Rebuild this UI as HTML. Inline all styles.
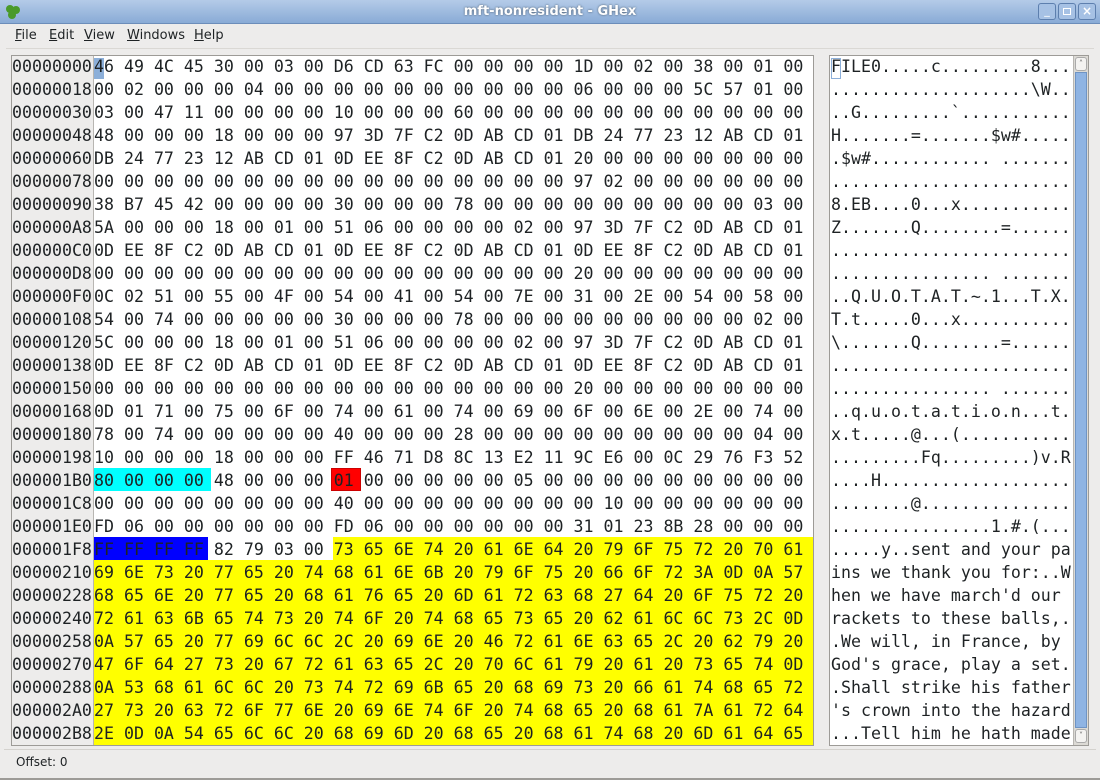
<!DOCTYPE html>
<html><head><meta charset="utf-8"><style>
*{margin:0;padding:0;box-sizing:border-box}
body{width:1100px;height:780px;background:#edeceb;position:relative;overflow:hidden;font-family:"DejaVu Sans","Liberation Sans",sans-serif;color:#1e2224}
.abs{position:absolute}
#title{left:0;top:0;width:1100px;height:24px;background:linear-gradient(#b4cbe8,#89abd6);border-bottom:1px solid #6c8dba;color:#fff;font-weight:bold;font-size:13px;text-align:center;line-height:23px;text-shadow:0 0 2px #456}
#menu{left:0;top:24px;width:1100px;height:24px;font-size:13px;line-height:24px}
#menu span{position:absolute;top:0}
#menu u{text-decoration:underline}
.mono{font-family:"DejaVu Sans Mono","Liberation Mono",monospace;font-size:16.6px;white-space:pre;line-height:23px}
#off{left:12px;top:56px;width:82px;height:689px;background:#edeceb;border-right:1px solid #b8b6b2}
#hexbg{left:94px;top:56px;width:719px;height:689px;background:#fff}
#frame{left:11px;top:55px;width:803px;height:691px;border:1px solid #9d9b97}
#ascbg{left:829px;top:55px;width:260px;height:691px;border:1px solid #9d9b97;background:#fff}
.rows{top:55px}
.rows div{height:23px}
#sb{left:1073px;top:56px;width:15px;height:689px;background:#dcdad5;border-left:1px solid #b8b6b2}
#thumb{left:1075px;top:72px;width:12px;height:656px;background:#8fb4e3;border:1px solid #6f94c4}
</style></head><body>
<div id="title" class="abs">mft-nonresident - GHex</div>
<svg class="abs" style="left:5px;top:4px" width="16" height="16"><circle cx="5" cy="5" r="4" fill="#4a9a2a"/><circle cx="11" cy="6" r="4" fill="#4a9a2a"/><circle cx="7" cy="11" r="4" fill="#4a9a2a"/></svg>
<div class="abs" style="left:1038px;top:3px;width:18px;height:17px;border:1px solid #5d7fae;border-radius:3px;background:#a6c1e4;color:#fff;font-size:11px;text-align:center;line-height:14px">_</div>
<div class="abs" style="left:1058px;top:3px;width:18px;height:17px;border:1px solid #5d7fae;border-radius:3px;background:#a6c1e4"><div style="margin:4px;width:8px;height:7px;border:1px solid #fff"></div></div>
<div class="abs" style="left:1078px;top:3px;width:18px;height:17px;border:1px solid #5d7fae;border-radius:3px;background:#a6c1e4;color:#fff;font-size:12px;text-align:center;line-height:15px;font-weight:bold">×</div>
<div id="menu" class="abs">
<span style="left:15px"><u>F</u>ile</span><span style="left:49px"><u>E</u>dit</span><span style="left:84px"><u>V</u>iew</span><span style="left:127px"><u>W</u>indows</span><span style="left:194px"><u>H</u>elp</span>
</div>
<div class="abs" style="left:6px;top:48px;width:1088px;height:1px;background:#dad8d4"></div>
<div id="off" class="abs"></div>
<div id="hexbg" class="abs"></div>
<div id="frame" class="abs"></div>
<div id="ascbg" class="abs"></div>
<div id="sb" class="abs"></div>
<div id="thumb" class="abs"></div>
<div class="abs" style="left:1075px;top:57px;width:12px;height:14px;border:1px solid #aaa;border-radius:3px;background:#f4f3f1;font-size:8px;text-align:center;line-height:12px;color:#666">˄</div>
<div class="abs" style="left:1075px;top:729px;width:12px;height:14px;border:1px solid #aaa;border-radius:3px;background:#f4f3f1;font-size:8px;text-align:center;line-height:12px;color:#666">˅</div>
<div class="abs" style="left:94px;top:58px;width:10px;height:21px;background:#8cafd9"></div>
<div class="abs" style="left:831px;top:58px;width:10px;height:21px;border:1px solid #8cafd9"></div>
<div class="abs" style="left:94px;top:468px;width:117px;height:23px;background:#00ffff"></div>
<div class="abs" style="left:331px;top:468px;width:30px;height:23px;background:#ff0000;border:1px solid #c00"></div>
<div class="abs" style="left:94px;top:537px;width:114px;height:23px;background:#0000ff"></div>
<div class="abs" style="left:333px;top:537px;width:480px;height:23px;background:#ffff00"></div>
<div class="abs" style="left:94px;top:560px;width:719px;height:185px;background:#ffff00"></div>
<div class="abs mono rows" style="left:12px"><div>00000000</div><div>00000018</div><div>00000030</div><div>00000048</div><div>00000060</div><div>00000078</div><div>00000090</div><div>000000A8</div><div>000000C0</div><div>000000D8</div><div>000000F0</div><div>00000108</div><div>00000120</div><div>00000138</div><div>00000150</div><div>00000168</div><div>00000180</div><div>00000198</div><div>000001B0</div><div>000001C8</div><div>000001E0</div><div>000001F8</div><div>00000210</div><div>00000228</div><div>00000240</div><div>00000258</div><div>00000270</div><div>00000288</div><div>000002A0</div><div>000002B8</div></div>
<div class="abs mono rows" style="left:94px"><div>46 49 4C 45 30 00 03 00 D6 CD 63 FC 00 00 00 00 1D 00 02 00 38 00 01 00</div><div>00 02 00 00 00 04 00 00 00 00 00 00 00 00 00 00 06 00 00 00 5C 57 01 00</div><div>03 00 47 11 00 00 00 00 10 00 00 00 60 00 00 00 00 00 00 00 00 00 00 00</div><div>48 00 00 00 18 00 00 00 97 3D 7F C2 0D AB CD 01 DB 24 77 23 12 AB CD 01</div><div>DB 24 77 23 12 AB CD 01 0D EE 8F C2 0D AB CD 01 20 00 00 00 00 00 00 00</div><div>00 00 00 00 00 00 00 00 00 00 00 00 00 00 00 00 97 02 00 00 00 00 00 00</div><div>38 B7 45 42 00 00 00 00 30 00 00 00 78 00 00 00 00 00 00 00 00 00 03 00</div><div>5A 00 00 00 18 00 01 00 51 06 00 00 00 00 02 00 97 3D 7F C2 0D AB CD 01</div><div>0D EE 8F C2 0D AB CD 01 0D EE 8F C2 0D AB CD 01 0D EE 8F C2 0D AB CD 01</div><div>00 00 00 00 00 00 00 00 00 00 00 00 00 00 00 00 20 00 00 00 00 00 00 00</div><div>0C 02 51 00 55 00 4F 00 54 00 41 00 54 00 7E 00 31 00 2E 00 54 00 58 00</div><div>54 00 74 00 00 00 00 00 30 00 00 00 78 00 00 00 00 00 00 00 00 00 02 00</div><div>5C 00 00 00 18 00 01 00 51 06 00 00 00 00 02 00 97 3D 7F C2 0D AB CD 01</div><div>0D EE 8F C2 0D AB CD 01 0D EE 8F C2 0D AB CD 01 0D EE 8F C2 0D AB CD 01</div><div>00 00 00 00 00 00 00 00 00 00 00 00 00 00 00 00 20 00 00 00 00 00 00 00</div><div>0D 01 71 00 75 00 6F 00 74 00 61 00 74 00 69 00 6F 00 6E 00 2E 00 74 00</div><div>78 00 74 00 00 00 00 00 40 00 00 00 28 00 00 00 00 00 00 00 00 00 04 00</div><div>10 00 00 00 18 00 00 00 FF 46 71 D8 8C 13 E2 11 9C E6 00 0C 29 76 F3 52</div><div>80 00 00 00 48 00 00 00 01 00 00 00 00 00 05 00 00 00 00 00 00 00 00 00</div><div>00 00 00 00 00 00 00 00 40 00 00 00 00 00 00 00 00 10 00 00 00 00 00 00</div><div>FD 06 00 00 00 00 00 00 FD 06 00 00 00 00 00 00 31 01 23 8B 28 00 00 00</div><div>FF FF FF FF 82 79 03 00 73 65 6E 74 20 61 6E 64 20 79 6F 75 72 20 70 61</div><div>69 6E 73 20 77 65 20 74 68 61 6E 6B 20 79 6F 75 20 66 6F 72 3A 0D 0A 57</div><div>68 65 6E 20 77 65 20 68 61 76 65 20 6D 61 72 63 68 27 64 20 6F 75 72 20</div><div>72 61 63 6B 65 74 73 20 74 6F 20 74 68 65 73 65 20 62 61 6C 6C 73 2C 0D</div><div>0A 57 65 20 77 69 6C 6C 2C 20 69 6E 20 46 72 61 6E 63 65 2C 20 62 79 20</div><div>47 6F 64 27 73 20 67 72 61 63 65 2C 20 70 6C 61 79 20 61 20 73 65 74 0D</div><div>0A 53 68 61 6C 6C 20 73 74 72 69 6B 65 20 68 69 73 20 66 61 74 68 65 72</div><div>27 73 20 63 72 6F 77 6E 20 69 6E 74 6F 20 74 68 65 20 68 61 7A 61 72 64</div><div>2E 0D 0A 54 65 6C 6C 20 68 69 6D 20 68 65 20 68 61 74 68 20 6D 61 64 65</div></div>
<div class="abs mono rows" style="left:831px"><div>FILE0.....c.........8...</div><div>....................\W..</div><div>..G.........`...........</div><div>H.......=.......$w#.....</div><div>.$w#............ .......</div><div>........................</div><div>8.EB....0...x...........</div><div>Z.......Q........=......</div><div>........................</div><div>................ .......</div><div>..Q.U.O.T.A.T.~.1...T.X.</div><div>T.t.....0...x...........</div><div>\.......Q........=......</div><div>........................</div><div>................ .......</div><div>..q.u.o.t.a.t.i.o.n...t.</div><div>x.t.....@...(...........</div><div>.........Fq.........)v.R</div><div>....H...................</div><div>........@...............</div><div>................1.#.(...</div><div>.....y..sent and your pa</div><div>ins we thank you for:..W</div><div>hen we have march'd our </div><div>rackets to these balls,.</div><div>.We will, in France, by </div><div>God's grace, play a set.</div><div>.Shall strike his father</div><div>'s crown into the hazard</div><div>...Tell him he hath made</div></div>
<div class="abs" style="left:4px;top:749px;width:1092px;height:1px;background:#d4d2ce"></div>
<div class="abs" style="left:16px;top:754px;font-size:12px;line-height:16px">Offset: 0</div>
<div class="abs" style="left:0;top:778px;width:1100px;height:2px;background:#9d9b97"></div>
</body></html>
